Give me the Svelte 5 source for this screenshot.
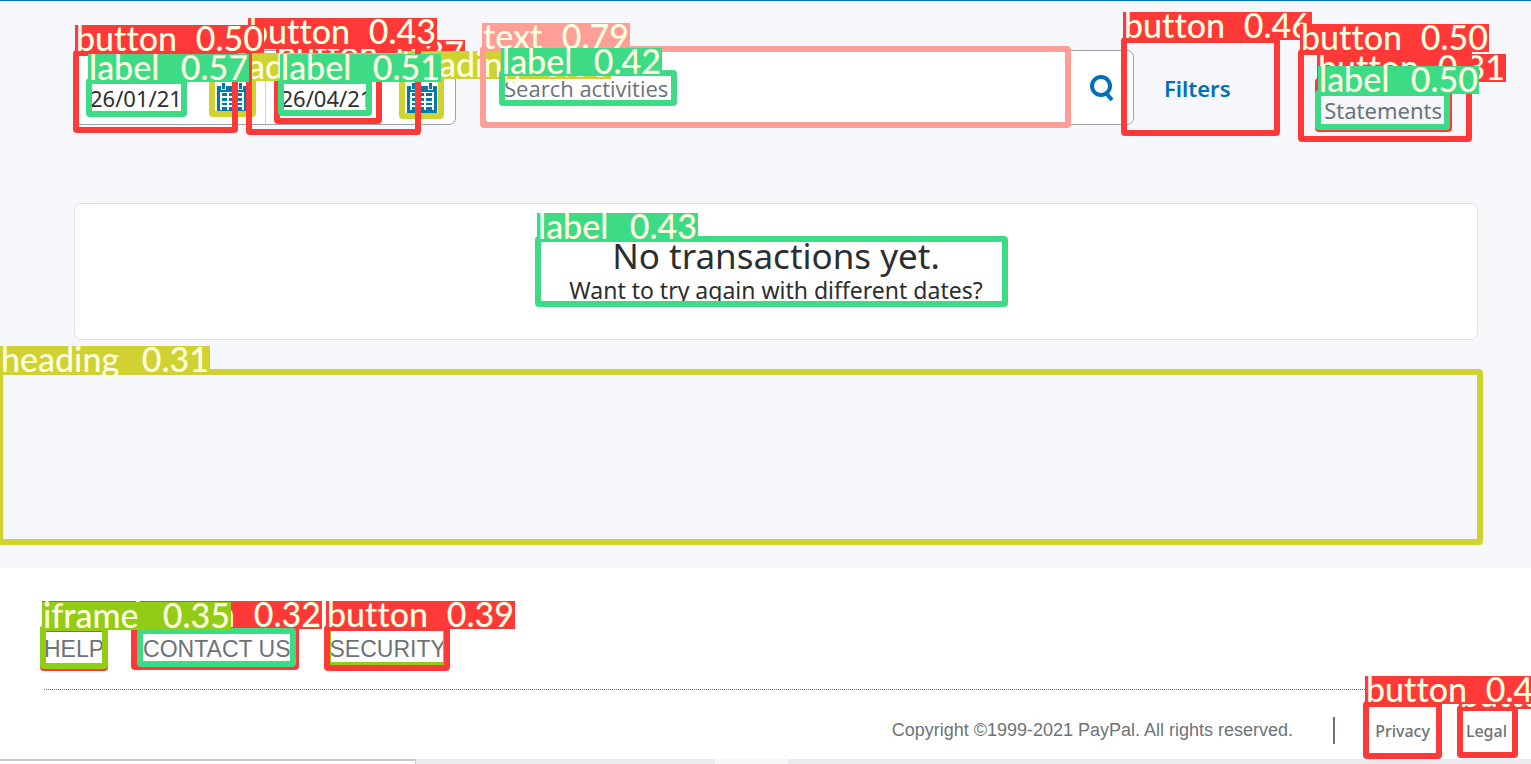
<script>
  let from = $state('26/01/21');
  let to = $state('26/04/21');
  let query = $state('');

  // Detections, painted in order. box: [left, top, right, bottom]; tag: [left, top]
  const detections = [
    { kind: 'button', score: '0.37', box: [274, 66, 382, 124], tag: [276, 40] },
    { kind: 'heading', score: '0.33', box: [209, 75, 256, 117], tag: [210, 53] },
    { kind: 'heading', score: '0.33', box: [399, 73, 444, 119], tag: [401, 51] },
    { kind: 'button', score: '0.43', box: [246, 43, 421, 135], tag: [248, 18] },
    { kind: 'button', score: '0.50', box: [73, 50, 238, 133], tag: [75, 25] },
    { kind: 'text', score: '0.79', box: [480, 46, 1071, 128], tag: [482, 23] },
    { kind: 'label', score: '0.42', box: [499, 70, 677, 106], tag: [501, 48] },
    { kind: 'label', score: '0.57', box: [86, 78, 187, 117], tag: [88, 54] },
    { kind: 'label', score: '0.51', box: [278, 78, 372, 116], tag: [280, 54] },
    { kind: 'button', score: '0.46', box: [1121, 37, 1280, 136], tag: [1123, 12] },
    { kind: 'button', score: '0.31', box: [1315, 78, 1452, 132], tag: [1317, 54] },
    { kind: 'button', score: '0.50', box: [1298, 49, 1472, 142], tag: [1300, 24] },
    { kind: 'label', score: '0.50', box: [1315, 90, 1450, 130], tag: [1318, 66] },
    { kind: 'label', score: '0.43', box: [535, 236, 1008, 307], tag: [537, 213] },
    { kind: 'heading', score: '0.31', box: [-3, 369, 1483, 545], tag: [0, 346] },
    { kind: 'button', score: '0.32', box: [40, 626, 108, 671], tag: [42, 601] },
    { kind: 'label', score: '0.32', box: [137, 627, 296, 667] },
    { kind: 'button', score: '0.32', box: [131, 625, 299, 670], tag: [133, 601] },
    { kind: 'label', score: '0.32', box: [137, 628, 296, 667] },
    { kind: 'iframe', score: '0.35', box: [40, 625, 108, 669], tag: [42, 602] },
    { kind: 'iframe', score: '0.33', box: [325, 625, 449, 668] },
    { kind: 'button', score: '0.39', box: [324, 625, 450, 671], tag: [326, 601] },
    { kind: 'button', score: '0.41', box: [1457, 705, 1518, 758], tag: [1459, 681] },
    { kind: 'button', score: '0.42', box: [1363, 701, 1442, 759], tag: [1365, 676] }
  ];
</script>

{#snippet calendar()}
  <svg width="30" height="30" viewBox="0 0 30 30" aria-hidden="true">
    <path fill="#0079ad" d="M0 3h4v4h5V3h12v4h5V3h4v27H0z" />
    <path fill="#0079ad" d="M5 0h3v6H5zM22 0h3v6h-3z" />
    <path fill="#fff" d="M3 9h24v18H3z" />
    <path
      fill="#0079ad"
      d="M5 10h5v3H5zM12 10h5v3h-5zM19 10h6v3h-6zM5 15h5v3H5zM12 15h5v3h-5zM19 15h6v3h-6zM5 20h5v2H5zM12 20h5v2h-5zM19 20h6v2h-6zM5 24h5v3H5zM12 24h5v3h-5zM19 24h6v3h-6z"
    />
  </svg>
{/snippet}

<div class="page">
  <main>
    <form class="toolbar" onsubmit={(e) => e.preventDefault()}>
      <div class="dates">
        <div class="date">
          <input type="text" aria-label="From" bind:value={from} />
          <button type="button" aria-label="Choose start date">{@render calendar()}</button>
        </div>
        <div class="date">
          <input type="text" aria-label="To" bind:value={to} />
          <button type="button" aria-label="Choose end date">{@render calendar()}</button>
        </div>
      </div>
      <div class="search">
        <input type="text" aria-label="Search activities" placeholder="Search activities" bind:value={query} />
        <button type="submit" aria-label="Search">
          <svg width="26" height="28" viewBox="0 0 26 28" aria-hidden="true">
            <circle cx="12" cy="12" r="9" fill="none" stroke="#0070ba" stroke-width="4" />
            <path d="M16 18l7 8" stroke="#0070ba" stroke-width="4" />
          </svg>
        </button>
      </div>
      <div class="actions">
        <button type="button" class="filters">Filters</button>
        <button type="button" class="statements">Statements</button>
      </div>
    </form>

    <section class="empty">
      <h1>No transactions yet.</h1>
      <p>Want to try again with different dates?</p>
    </section>
  </main>

  <footer>
    <nav class="links">
      <a href="#help">HELP</a>
      <a href="#contact">CONTACT US</a>
      <a href="#security">SECURITY</a>
    </nav>
    <div class="legal">
      <span class="copyright">Copyright ©1999-2021 PayPal. All rights reserved.</span>
      <a href="#privacy">Privacy</a>
      <a href="#legal">Legal</a>
    </div>
    <div class="strip"><i class="status"></i><i></i><i class="pale"></i><i></i></div>
  </footer>

  <div class="overlay">
    {#each detections as d}
      <div
        class="box {d.kind}"
        style="left:{d.box[0]}px;top:{d.box[1]}px;width:{d.box[2] - d.box[0]}px;height:{d.box[3] - d.box[1]}px"
      ></div>
      {#if d.tag}
        <div class="tag {d.kind}" style="left:{d.tag[0]}px;top:{d.tag[1]}px">
          <span>{d.kind}</span><span>{d.score}</span>
        </div>
      {/if}
    {/each}
  </div>
</div>

<style>
  :global(body) {
    margin: 0;
  }
  .page,
  .page * {
    box-sizing: border-box;
  }
  .page {
    position: relative;
    display: flex;
    flex-direction: column;
    min-height: 100vh;
    overflow: hidden;
    background: #fff;
    color: #2c2e2f;
    font-family: 'Noto Sans', sans-serif;
    font-size: 22px;
  }
  input,
  button {
    margin: 0;
    padding: 0;
    border: 0;
    background: none;
    color: inherit;
    font: inherit;
  }
  button {
    cursor: pointer;
  }
  a {
    color: #6c7378;
    text-decoration: none;
  }
  svg {
    display: block;
  }
  main {
    flex: 1;
    padding: 49px 53px 24px 74px;
    border-top: 1px solid #0070ba;
    background: #f5f7fb;
  }
  .toolbar {
    display: grid;
    grid-template-columns: 382px minmax(0, 1fr) 344px;
    height: 75px;
  }
  .dates,
  .search {
    display: flex;
    border: 1px solid #9da3a6;
    border-radius: 7px;
    background: #fff;
  }
  .date {
    display: flex;
    flex: 1;
    align-items: flex-end;
    gap: 16px;
    min-width: 0;
    padding: 0 18px 11px 15px;
  }
  .date + .date {
    border-left: 1px solid #cbd2d6;
  }
  .date input {
    flex: 1;
    min-width: 0;
    height: 30px;
  }
  .search {
    align-items: center;
    margin-left: 29px;
    padding: 0 18px;
  }
  .search input {
    flex: 1;
    min-width: 0;
    font-family: 'Open Sans', sans-serif;
  }
  .search input::placeholder {
    color: #6c7378;
    opacity: 1;
  }
  .actions {
    display: flex;
    justify-content: space-between;
    align-items: center;
    padding: 0 36px 0 30px;
  }
  .filters {
    color: #0070ba;
    font-weight: 600;
  }
  .statements {
    align-self: flex-end;
    color: #6c7378;
  }
  .empty {
    min-height: 137px;
    margin-top: 78px;
    padding: 30px 20px 32px;
    border: 1px solid #dde1e4;
    border-radius: 7px;
    background: #fff;
    text-align: center;
  }
  h1,
  p {
    margin: 0;
    font-weight: 400;
  }
  h1 {
    font-size: 35px;
    line-height: 44px;
  }
  p {
    font-size: 23px;
    line-height: 24px;
  }
  footer {
    display: flex;
    flex-direction: column;
  }
  .links {
    display: flex;
    gap: 39px;
    margin: 0 44px;
    padding: 66px 0 24px;
    border-bottom: 1px dotted #6c7378;
    font-family: 'Liberation Sans', Arial, sans-serif;
    font-size: 23px;
    line-height: 31px;
  }
  .legal {
    display: flex;
    justify-content: flex-end;
    align-items: center;
    gap: 36px;
    height: 69px;
    padding: 12px 24px 0 44px;
    font-size: 16px;
    font-weight: 500;
  }
  .copyright {
    margin-right: 4px;
    padding-right: 40px;
    border-right: 2px solid #6c7378;
    color: #6c7378;
    font-family: 'Liberation Sans', Arial, sans-serif;
    font-size: 18px;
    font-weight: 400;
    line-height: 27px;
  }
  .strip {
    display: grid;
    grid-template-columns: 416px 299px 73px 1fr;
    height: 5px;
    background: #e9ebf1;
  }
  .status {
    border-top: 2px solid #ccc;
    border-right: 1px solid #ccc;
    background: #fff;
  }
  .pale {
    background: #f7f7f8;
  }
  .overlay {
    position: absolute;
    inset: 0;
    overflow: hidden;
    pointer-events: none;
  }
  .box {
    position: absolute;
    border: 6px solid var(--tone);
    border-radius: 4px;
  }
  .tag {
    position: absolute;
    display: flex;
    justify-content: space-between;
    width: 189px;
    height: 28px;
    padding: 0 1px;
    background: var(--tone);
    color: #ffffe1;
    font-family: Lato, sans-serif;
    font-size: 34px;
    font-weight: 500;
    font-variant-ligatures: none;
    line-height: 25px;
    white-space: nowrap;
  }
  .button {
    --tone: #ff3838;
  }
  .label {
    --tone: #3ddb86;
  }
  .heading {
    --tone: #cfd231;
  }
  .text {
    --tone: #ff9d97;
  }
  .iframe {
    --tone: #92cc17;
  }
  .tag.label {
    width: 161px;
  }
  .tag.heading {
    width: 210px;
  }
  .tag.text {
    width: 148px;
  }
</style>
